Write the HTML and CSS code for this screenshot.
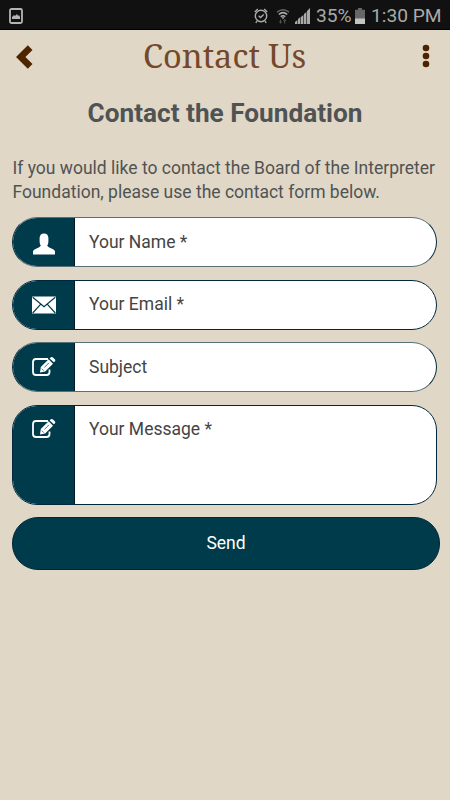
FILE: index.html
```html
<!DOCTYPE html>
<html lang="en">
<head>
<meta charset="utf-8">
<title>Contact Us</title>
<link rel="stylesheet" href="styles.css">
</head>
<body>
<div class="status">
  <svg class="shot" width="14" height="16" viewBox="0 0 14 16"><rect x="1" y="1" width="12" height="14" rx="1.5" fill="none" stroke="#b5b5b5" stroke-width="1.8"/><path d="M3 11V9l2-2 1 1 2-2 1 2 1-1 1 2v2z" fill="#b5b5b5"/></svg>
  <svg class="alarm" width="14" height="16" viewBox="0 0 14 16" fill="none" stroke="#aaa" stroke-width="1.4"><circle cx="7" cy="8" r="5.7"/><path d="M.8 4l3-2.9M13.2 4l-3-2.9M3 13l-1.2 2M11 13l1.2 2M4.6 7.8l2 1.7 3-3"/></svg>
  <svg class="wifi" width="14" height="16" viewBox="0 0 14 16" fill="none" stroke-width="1.5"><path d="M1 4.2Q7-.8 13 4.2" stroke="#666"/><path d="M2.8 6.5Q7 2.8 11.2 6.5M4.7 8.6Q7 6.8 9.3 8.6" stroke="#aaa"/><path d="M5.3 9.2h3.4L7 11.2z" fill="#aaa"/><path d="M4.5 11.5v4M8.7 11.5v4M3.3 13.5l1.2 1.5 1.2-1.5M7.5 13l1.2-1.5 1.2 1.5" stroke="#555" stroke-width="1"/></svg>
  <svg class="signal" width="16" height="16" viewBox="0 0 16 16" fill="#aaa"><path d="M0 16v-2l2.4-2v4zM3 16v-5l2.4-2v7zM6 16V9l2.4-2v9zM9 16V6l2.4-2v12zM12 16V3l3-3v16z"/></svg>
  <span class="percent">35%</span>
  <svg class="battery" width="10" height="16" viewBox="0 0 10 16"><path d="M0 1.7h3V0h4v1.7h3V16H0z" fill="#666"/><path d="M0 10.5h10V16H0z" fill="#c4c4c4"/></svg>
  <span class="clock">1:30 PM</span>
</div>
<header class="bar">
  <svg class="back" width="17" height="24" viewBox="0 0 17 24"><path d="M0 12L11.8.3l4.7 4.7-7.1 7 7.1 7-4.7 4.7z" fill="#4d2600"/></svg>
  <h1>Contact Us</h1>
  <svg class="more" width="8" height="24" viewBox="0 0 8 24" fill="#4d2200"><circle cx="4" cy="4" r="3.3"/><circle cx="4" cy="12" r="3.3"/><circle cx="4" cy="20" r="3.3"/></svg>
</header>
<main>
  <h2>Contact the Foundation</h2>
  <p>If you would like to contact the Board of the Interpreter Foundation, please use the contact form below.</p>
  <form>
    <div class="field soft"><div class="icon"><svg class="person" width="24" height="22" viewBox="0 0 24 22"><path d="M1 21.5v-3Q1 16.8 4 15.8Q8 14.5 8.8 12.8Q7.6 11 7.6 8.5V4.8Q8 .5 12 .5t4.4 4.3v3.7q0 2.5-1.2 4.3Q16 14.5 20 15.8q3 1 3 2.7v3z" fill="#fff"/></svg></div><div class="text">Your Name *</div></div>
    <div class="field"><div class="icon"><svg class="mail" width="24" height="18" viewBox="0 0 24 18"><rect width="24" height="17" y=".5" rx=".6" fill="#fff"/><path d="M.7 1.2L12 10.7 23.3 1.2M.7 17l8.1-8.8M23.3 17l-8.1-8.8" fill="none" stroke="#003b4c" stroke-width="1.2"/></svg></div><div class="text">Your Email *</div></div>
    <div class="field soft"><div class="icon"><svg class="edit" width="24" height="20" viewBox="0 0 24 20"><path d="M16 2H4Q1 2 1 5v10q0 3 3 3h10.500q3 0 3-3v-2.500" fill="none" stroke="#fff" stroke-width="1.8"/><path d="M8 15.500l.8-5.400 7.800-7.800 4.400 4.400-7.800 7.800zM17.600 1.400l.9-.8Q20-.4 21.200.7l1.600 1.600q1 1.200 0 2.100l-.9.9z" fill="#fff"/><path d="M12.300 10.500l4.700-4.700M9.800 11.700l2 2" stroke="#003b4c" stroke-width=".7"/></svg></div><div class="text">Subject</div></div>
    <div class="field message"><div class="icon"><svg class="edit" width="24" height="20" viewBox="0 0 24 20"><path d="M16 2H4Q1 2 1 5v10q0 3 3 3h10.500q3 0 3-3v-2.500" fill="none" stroke="#fff" stroke-width="1.8"/><path d="M8 15.500l.8-5.400 7.800-7.800 4.400 4.400-7.800 7.800zM17.600 1.400l.9-.8Q20-.4 21.200.7l1.600 1.600q1 1.200 0 2.100l-.9.9z" fill="#fff"/><path d="M12.300 10.500l4.700-4.700M9.800 11.700l2 2" stroke="#003b4c" stroke-width=".7"/></svg></div><div class="text">Your Message *</div></div>
    <button type="button">Send</button>
  </form>
</main>
</body>
</html>
```
FILE: styles.css
```css
* { box-sizing: border-box; }
body {
  margin: 0;
  min-height: 800px;
  background: #e0d7c6;
  font-family: Roboto, sans-serif;
  color: #505354;
}
svg { display: block; flex: none; }
.status {
  height: 30px;
  display: flex;
  align-items: center;
  padding: 2px 11px 0 9px;
  background: #111;
  border-bottom: 1px solid #000;
  color: #aaa;
  font-size: 19.2px;
  line-height: 22px;
  white-space: nowrap;
}
.shot { margin-right: auto; }
.alarm { margin-right: 8px; }
.wifi { margin-right: 5px; }
.signal { margin-right: 5px; }
.percent { width: 34px; }
.battery { margin: 0 6px 0 5px; }
.clock { width: 68px; }
.bar {
  height: 50px;
  display: flex;
  align-items: center;
  padding: 0 20px 0 16px;
}
.back { margin-top: 3px; }
.more { margin: 1px 0 0 auto; }
h1 {
  margin: 2px 0 0 110px;
  font: 400 32.5px/44px "Noto Serif", "DejaVu Serif Condensed", "Liberation Serif", serif;
  color: #75482a;
  white-space: nowrap;
}
main { padding: 16px 12px 0; }
h2 {
  margin: 0 0 25.5px;
  text-align: center;
  font-size: 26.2px;
  line-height: 34px;
  font-weight: 700;
}
p { margin: 0; padding-left: .5px; font-size: 17.5px; line-height: 24px; }
form { display: flex; flex-direction: column; gap: 12.5px; padding-top: 13.9px; }
.field {
  width: 425px;
  height: 50px;
  display: flex;
  overflow: hidden;
  border: 1px solid #00283c;
  border-radius: 25px;
  background: #fff;
}
.soft { border-top-color: #587078; border-bottom-color: #587078; }
.message { height: 100px; }
.icon {
  width: 62px;
  display: flex;
  justify-content: center;
  align-items: flex-start;
  padding-top: 14px;
  background: #003b4c;
  border-right: 1px solid #00182c;
}
.icon .person { margin-top: 1px; }
.icon .mail { margin-top: 1px; }
.icon .edit { margin-top: 0; }
.message .edit { margin-top: -1px; }
.text { padding: 11.5px 14px; font-size: 17.5px; line-height: 24px; color: #444; }
button {
  width: 428px;
  height: 52.5px;
  padding: 0 0 2px;
  border: 1px solid #00283c;
  border-radius: 26px;
  background: #003b4c;
  color: #fff;
  font: 400 17.5px/24px Roboto, sans-serif;
}
```
